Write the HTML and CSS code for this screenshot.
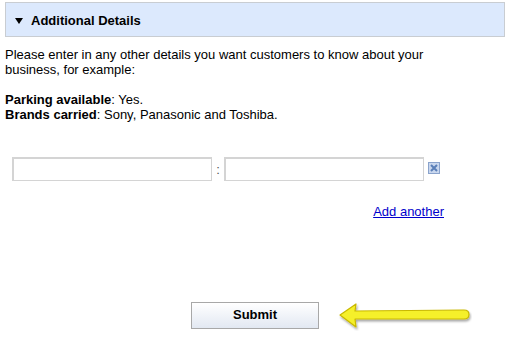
FILE: index.html
```html
<!DOCTYPE html>
<html lang="en">

<head>
    <meta charset="UTF-8">
    <title>Additional Details</title>
    <link rel="stylesheet" href="styles.css">
</head>

<body>
    <div class="section-head">
        <span class="caret"></span>
        <span class="section-title">Additional Details</span>
    </div>

    <p class="intro">
        Please enter in any other details you want customers to know about your<br>
        business, for example:<br>
        <br>
        <b>Parking available</b>: Yes.<br>
        <b>Brands carried</b>: Sony, Panasonic and Toshiba.
    </p>

    <div class="detail-row">
        <input type="text" class="field">
        <span class="sep">:</span>
        <input type="text" class="field">
        <span class="remove" title="Remove">
            <svg width="12" height="12" viewBox="0 0 12 12">
                <rect x="0.5" y="0.5" width="11" height="11" fill="#c9d7ee" stroke="#8aa3cc"/>
                <path d="M3 3 L9 9 M9 3 L3 9" stroke="#5a7fb8" stroke-width="2"/>
            </svg>
        </span>
    </div>

    <div class="add-row">
        <a href="#" class="add-link">Add another</a>
    </div>

    <div class="submit-row">
        <button class="submit">Submit</button>
        <svg class="arrow" width="134" height="30" viewBox="0 0 134 30">
            <defs>
                <filter id="sh" x="-10%" y="-30%" width="120%" height="170%">
                    <feDropShadow dx="1" dy="2" stdDeviation="1.2" flood-color="#000" flood-opacity="0.35"/>
                </filter>
            </defs>
            <path d="M2 14 L18 3 L17 10 L126 9 Q131 9 131 13.5 Q131 18 126 18 L17 18 L18 26 Z"
                fill="#f5f02a" stroke="#c9b800" stroke-width="1.2" stroke-linejoin="round" filter="url(#sh)"/>
        </svg>
    </div>
</body>

</html>
```

FILE: styles.css
```css
body {
    margin: 0;
    font-family: "Liberation Sans", Arial, sans-serif;
    font-size: 13px;
    color: #000;
    background: #fff;
}

.section-head {
    display: flex;
    align-items: center;
    margin: 2px 5px 0 5px;
    height: 31px;
    padding-top: 2px;
    padding-left: 9px;
    background-color: #dce9fd;
    border: 1px solid #c9cdd2;
}

.caret {
    width: 0;
    height: 0;
    border-left: 4px solid transparent;
    border-right: 4px solid transparent;
    border-top: 6px solid #000;
    margin-right: 8px;
}

.section-title {
    font-weight: bold;
    font-size: 13px;
}

.intro {
    margin: 10px 0 0 5px;
    line-height: 15px;
}

.detail-row {
    display: flex;
    align-items: center;
    margin-top: 35px;
    padding-left: 12px;
}

.field {
    width: 200px;
    height: 24px;
    box-sizing: border-box;
    margin: 0;
    border: 2px solid #d4d4d4;
    border-width: 2px 1px 1px 2px;
    font-size: 13px;
}

.sep {
    width: 12px;
    text-align: center;
    color: #555;
}

.remove {
    display: flex;
    margin-left: 4px;
    margin-top: -3px;
}

.add-row {
    display: flex;
    justify-content: flex-end;
    margin-top: 23px;
    padding-right: 66px;
}

.add-link {
    color: #0000cc;
    line-height: 15px;
}

.submit-row {
    display: flex;
    align-items: center;
    margin-top: 80px;
    padding-left: 191px;
    gap: 19px;
}

.submit {
    width: 128px;
    height: 27px;
    padding-bottom: 3px;
    border: 1px solid #a8a8a8;
    border-radius: 0;
    background: linear-gradient(#ffffff, #e2e8f2);
    font-family: "Liberation Sans", Arial, sans-serif;
    font-weight: bold;
    font-size: 13px;
    cursor: pointer;
}

.arrow {
    margin-top: 2px;
}
```
